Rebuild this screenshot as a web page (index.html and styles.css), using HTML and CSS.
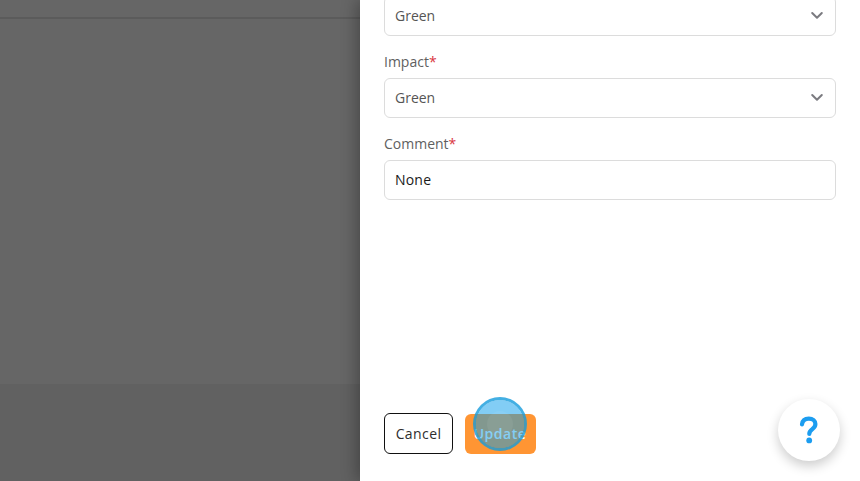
FILE: index.html
```html
<!DOCTYPE html>
<html lang="en">
<head>
<meta charset="utf-8">
<title>Update</title>
<link rel="stylesheet" href="styles.css">
</head>
<body>
<div class="app">
  <div class="backdrop">
    <div class="backdrop-top"></div>
    <div class="backdrop-main"></div>
    <div class="backdrop-bottom"></div>
  </div>
  <aside class="drawer">
    <form class="form">
      <div class="fields">
        <div class="select first"><span>Green</span>
          <svg class="chevron" width="14" height="9" viewBox="0 0 14 9"><path d="M2.2 2 7 6.8 11.8 2" fill="none" stroke="#7b7b80" stroke-width="2" stroke-linecap="round" stroke-linejoin="round"/></svg>
        </div>
        <div class="field">
          <div class="label">Impact<span class="req">*</span></div>
          <div class="select"><span>Green</span>
            <svg class="chevron" width="14" height="9" viewBox="0 0 14 9"><path d="M2.2 2 7 6.8 11.8 2" fill="none" stroke="#7b7b80" stroke-width="2" stroke-linecap="round" stroke-linejoin="round"/></svg>
          </div>
        </div>
        <div class="field">
          <div class="label">Comment<span class="req">*</span></div>
          <div class="input">None</div>
        </div>
      </div>
      <div class="actions">
        <div class="btn cancel">Cancel</div>
        <div class="btn update">Update</div>
      </div>
    </form>
  </aside>
  <div class="click-marker"><div class="click-core"></div></div>
  <div class="help">
    <svg width="20" height="28" viewBox="0 0 20 28"><path d="M3 8.4C3.4 4.6 6 2.6 9.8 2.6c3.9 0 6.6 2.2 6.6 5.5 0 2.6-1.4 3.9-3.2 5.2-1.9 1.3-2.9 2.3-2.9 4.7" fill="none" stroke="#1c9df0" stroke-width="4.2" stroke-linecap="round"/><circle cx="10.2" cy="24.4" r="2.9" fill="#1c9df0"/></svg>
  </div>
</div>
</body>
</html>
```
FILE: styles.css
```css
* { box-sizing: border-box; }
html, body { margin: 0; padding: 0; }
body { font-family: "Open Sans", "Liberation Sans", sans-serif; font-size: 14px; background: #fff; }
.app { position: relative; display: flex; width: 860px; height: 481px; overflow: hidden; }
.backdrop { width: 360px; flex: none; display: flex; flex-direction: column; background: #666; }
.backdrop-top { height: 19px; flex: none; border-bottom: 2px solid #5b5b5b; }
.backdrop-main { flex: 1; background: #666; }
.backdrop-bottom { height: 97px; flex: none; background: #616161; }
.drawer { flex: 1; background: #fff; padding: 0 24px 27px; box-shadow: -4px 0 14px rgba(0,0,0,.28); position: relative; }
.form { height: 100%; display: flex; flex-direction: column; justify-content: space-between; }
.fields { display: flex; flex-direction: column; gap: 18px; }
.field { display: flex; flex-direction: column; gap: 6px; }
.label { color: #5f5f5f; font-size: 14px; line-height: 20px; height: 20px; margin-top: -2px; }
.req { color: #d9363e; }
.select, .input { height: 40px; border: 1px solid #dcdcdc; border-radius: 6px; padding: 0 10px 1px; display: flex; align-items: center; justify-content: space-between; background: #fff; font-size: 14px; }
.select { color: #555; }
.input { color: #1a1a1a; font-weight: 500; letter-spacing: .2px; }
.first { margin-top: -4px; }
.chevron { margin-right: 1px; }
.actions { display: flex; gap: 12px; align-items: center; }
.btn { height: 41px; border-radius: 6px; display: flex; align-items: center; justify-content: center; font-size: 14px; letter-spacing: .4px; }
.cancel { width: 69px; border: 1px solid #111; color: #2e2e2e; background: #fff; font-weight: 500; }
.update { width: 71px; background: #ff9533; color: #fff; height: 40px; font-weight: 600; letter-spacing: .5px; padding-right: 1px; }
.click-marker { position: absolute; left: 473px; top: 397px; width: 54px; height: 54px; border-radius: 50%; border: 3px solid rgba(20,155,220,.8); background: rgba(5,155,235,.5); background-clip: padding-box; display: flex; align-items: center; justify-content: center; }
.click-core { width: 26px; height: 26px; border-radius: 50%; background: rgba(255,255,255,.06); }
.help { position: absolute; left: 778px; top: 399px; width: 62px; height: 62px; border-radius: 50%; background: #fff; box-shadow: 0 5px 12px rgba(0,0,0,.2); display: flex; align-items: center; justify-content: center; }
```
